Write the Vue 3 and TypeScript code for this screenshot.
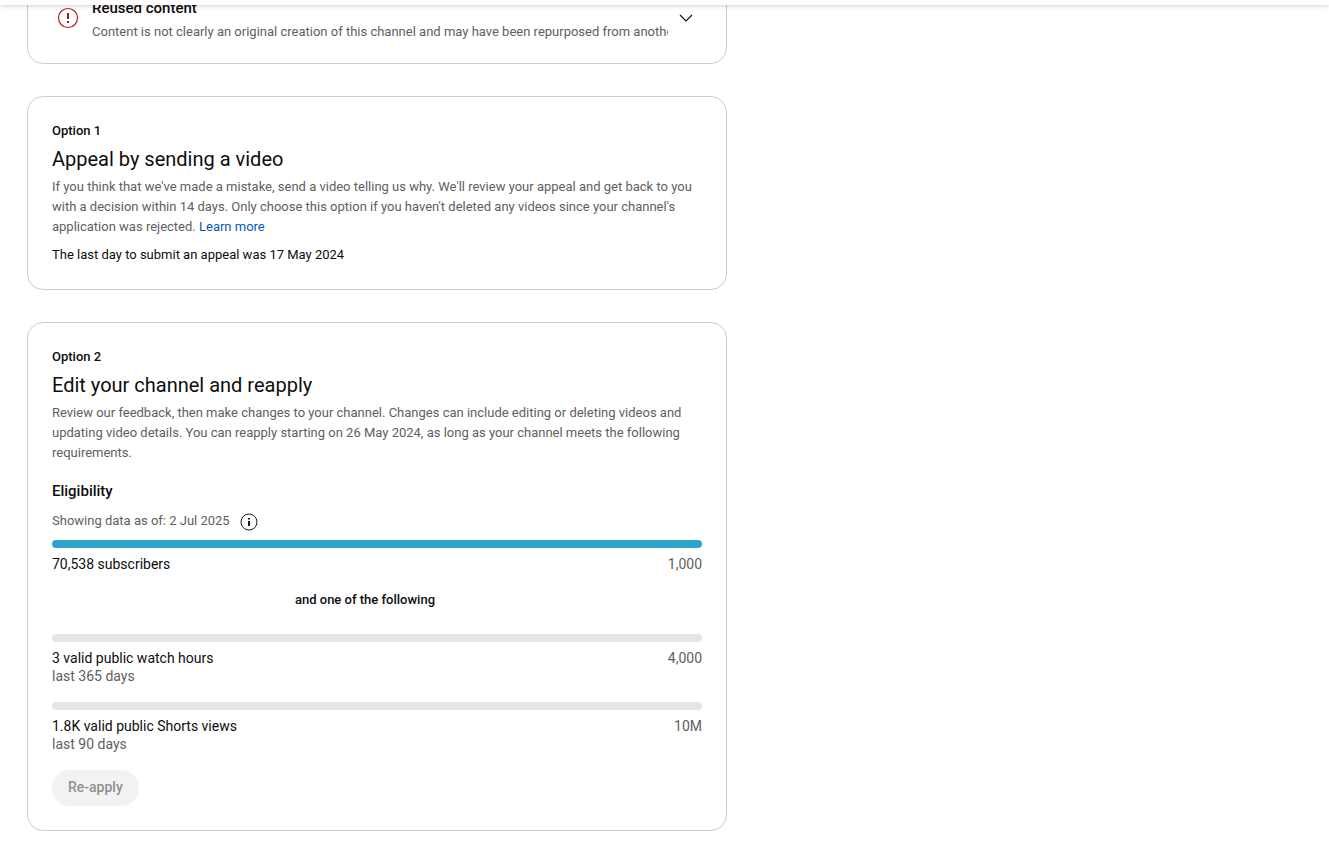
<script setup lang="ts">
interface Metric {
  id: string
  label: string
  period?: string
  target: string
  progress: number
}

const subscribers: Metric[] = [
  { id: 'subscribers', label: '70,538 subscribers', target: '1,000', progress: 100 },
]

const alternatives: Metric[] = [
  { id: 'hours', label: '3 valid public watch hours', period: 'last 365 days', target: '4,000', progress: 0 },
  { id: 'shorts', label: '1.8K valid public Shorts views', period: 'last 90 days', target: '10M', progress: 0 },
]

const groups = [
  { id: 'required', metrics: subscribers },
  { id: 'alternatives', metrics: alternatives },
]
</script>

<template>
  <div class="page">
    <header class="topbar"></header>
    <main class="content">
      <div class="cards">
        <section class="card issue-card">
          <svg class="alert" viewBox="0 0 24 24" aria-hidden="true">
            <circle cx="12" cy="12" r="9.5" fill="none" stroke="#b3201f" stroke-width="1.2" />
            <path d="M11 7h2v6h-2zM11 15h2v2h-2z" fill="#a31515" />
          </svg>
          <div class="issue-text">
            <h3 class="issue-title">Reused content</h3>
            <p class="issue-desc">Content is not clearly an original creation of this channel and may have been repurposed from another source</p>
          </div>
          <button class="icon-button expand" type="button" aria-label="Expand">
            <svg viewBox="0 0 24 24" width="24" height="24" aria-hidden="true">
              <path d="M6 9l6 6 6-6" fill="none" stroke="#0d0d0d" stroke-width="1.1" />
            </svg>
          </button>
        </section>

        <section class="card">
          <p class="option">Option 1</p>
          <h2 class="heading">Appeal by sending a video</h2>
          <p class="description">
            If you think that we've made a mistake, send a video telling us why. We'll review your appeal and get back to you with a decision within 14 days. Only choose this option if you haven't deleted any videos since your channel's application was rejected.
            <a href="#">Learn more</a>
          </p>
          <p class="deadline">The last day to submit an appeal was 17 May 2024</p>
        </section>

        <section class="card">
          <p class="option">Option 2</p>
          <h2 class="heading">Edit your channel and reapply</h2>
          <p class="description">
            Review our feedback, then make changes to your channel. Changes can include editing or deleting videos and updating video details. You can reapply starting on 26 May 2024, as long as your channel meets the following requirements.
          </p>
          <h3 class="eligibility">Eligibility</h3>
          <div class="as-of">
            <span>Showing data as of: 2 Jul 2025</span>
            <button class="icon-button" type="button" aria-label="More information">
              <svg viewBox="0 0 18 18" width="18" height="18" aria-hidden="true">
                <circle cx="9" cy="9" r="8" fill="none" stroke="#1a1a1a" stroke-width="1" />
                <path d="M8 5h2v1.5H8zM8 8h2v5H8z" fill="#1a1a1a" />
              </svg>
            </button>
          </div>
          <template v-for="(group, index) in groups" :key="group.id">
            <p v-if="index > 0" class="joiner">and one of the following</p>
            <div class="metrics">
              <div v-for="metric in group.metrics" :key="metric.id" class="metric">
                <div class="track" role="progressbar" :aria-label="metric.label" :aria-valuenow="metric.progress">
                  <div class="fill" :style="{ width: metric.progress + '%' }"></div>
                </div>
                <div class="metric-row">
                  <div>
                    <div>{{ metric.label }}</div>
                    <div v-if="metric.period" class="muted">{{ metric.period }}</div>
                  </div>
                  <div class="muted">{{ metric.target }}</div>
                </div>
              </div>
            </div>
          </template>
          <button class="reapply" type="button" disabled>Re-apply</button>
        </section>
      </div>
    </main>
  </div>
</template>

<style>
body {
  background: #fff;
}
</style>

<style scoped>
.page {
  display: flex;
  flex-direction: column;
  height: 100vh;
  overflow: hidden;
  font-family: Roboto, "Liberation Sans", sans-serif;
  font-size: 13px;
  line-height: 20px;
  color: #0d0d0d;
}

.page * {
  box-sizing: border-box;
}

h2,
h3,
p {
  margin: 0;
}

.topbar {
  flex: none;
  height: 5px;
  background: #fff;
  box-shadow: 0 1px 4px rgba(0, 0, 0, 0.18);
  z-index: 1;
}

.content {
  flex: 1;
  min-height: 0;
  overflow: hidden;
  padding: 0 27px;
}

/* The list is scrolled part of the way under the top bar. */
.cards {
  display: flex;
  flex-direction: column;
  gap: 32px;
  max-width: 700px;
  margin-top: -32px;
}

.card {
  border: 1px solid #ccc;
  border-radius: 16px;
  padding: 24px;
}

.issue-card {
  display: flex;
  align-items: flex-start;
  padding: 24px 28px 21px;
}

.alert {
  flex: none;
  width: 24px;
  height: 24px;
  margin-top: 8px;
  margin-right: 12px;
}

.issue-text {
  flex: 1;
  min-width: 0;
}

.issue-title {
  font-size: 15px;
  font-weight: 500;
}

.issue-desc {
  margin-top: 4px;
  color: #606060;
  white-space: nowrap;
  overflow: hidden;
}

.icon-button {
  display: flex;
  padding: 0;
  border: 0;
  background: none;
}

.expand {
  margin-top: 8px;
  margin-left: 6px;
}

.option {
  font-weight: 500;
}

.heading {
  margin-top: 4px;
  font-size: 20px;
  line-height: 28px;
  font-weight: 400;
}

.description {
  margin-top: 4px;
  color: #606060;
}

.description a {
  color: #065bb5;
  text-decoration: none;
}

.deadline {
  margin-top: 8px;
}

.eligibility {
  margin-top: 18px;
  font-size: 15px;
  font-weight: 500;
}

.as-of {
  display: flex;
  align-items: flex-end;
  gap: 10px;
  margin-top: 10px;
  margin-bottom: 9px;
  color: #606060;
}

.joiner {
  margin: 17px 24px 24px 0;
  text-align: center;
  font-weight: 500;
}

.metrics {
  display: flex;
  flex-direction: column;
  gap: 17px;
}

.track {
  height: 8px;
  border-radius: 4px;
  background: #e5e5e5;
  overflow: hidden;
}

.fill {
  height: 100%;
  background: #2ea4cd;
}

.metric-row {
  display: flex;
  justify-content: space-between;
  margin-top: 7px;
  font-size: 14px;
  line-height: 18px;
}

.muted {
  color: #606060;
}

.reapply {
  display: block;
  height: 36px;
  margin-top: 17px;
  padding: 0 16px 2px;
  border: 0;
  border-radius: 18px;
  background: #f2f2f2;
  color: #909090;
  font-family: inherit;
  font-size: 14px;
  font-weight: 500;
}
</style>
